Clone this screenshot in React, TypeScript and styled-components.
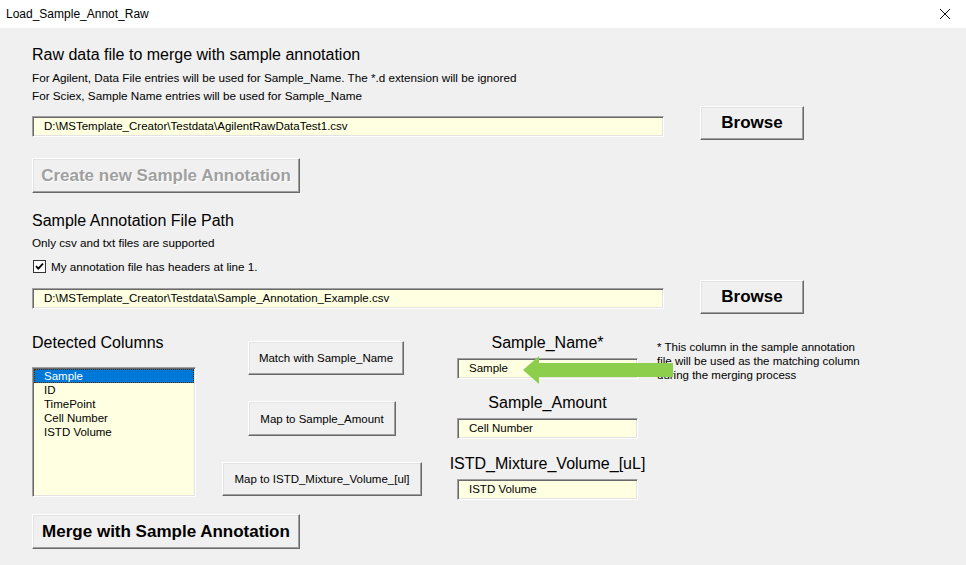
import React from "react";
import styled, { createGlobalStyle } from "styled-components";

const Global = createGlobalStyle`
  html, body { margin: 0; padding: 0; background: #f0f0f0; }
  body { font-family: "Liberation Sans", Arial, sans-serif; color: #000; }
  * { box-sizing: border-box; }
`;

const Window = styled.div`
  width: 966px;
  height: 565px;
  background: #f0f0f0;
  overflow: hidden;
  display: flex;
  flex-direction: column;
`;

const TitleBar = styled.div`
  height: 28px;
  background: #ffffff;
  display: flex;
  align-items: center;
  justify-content: space-between;
  padding: 0 0 0 6px;
`;

const Title = styled.span`
  font-size: 12px;
  color: #000;
`;

const CloseBox = styled.div`
  width: 46px;
  height: 28px;
  display: flex;
  align-items: center;
  justify-content: center;
  margin-right: -2px;
`;

const Body = styled.div`
  padding: 17px 0 0 32px;
  display: flex;
  flex-direction: column;
  align-items: flex-start;
  position: relative;
`;

const Heading = styled.div<{ $mt?: number }>`
  font-size: 16px;
  line-height: 20px;
  color: #000;
  margin-top: ${(p) => p.$mt ?? 0}px;
  white-space: nowrap;
`;

const Hint = styled.div<{ $mt?: number }>`
  font-size: 11.7px;
  line-height: 18px;
  margin-top: ${(p) => p.$mt ?? 0}px;
  white-space: nowrap;
`;

const FileRow = styled.div<{ $mt: number }>`
  display: flex;
  align-items: flex-start;
  gap: 36px;
  margin-top: ${(p) => p.$mt}px;
`;

const TextBox = styled.div<{ $w: number; $mt?: number; $pl?: number }>`
  width: ${(p) => p.$w}px;
  height: 21px;
  margin-top: ${(p) => p.$mt ?? 0}px;
  background: #ffffe1;
  border: 1px solid;
  border-color: #a0a0a0 #ffffff #ffffff #a0a0a0;
  box-shadow: inset 1px 1px 0 #696969, inset -1px -1px 0 #e3e3e3;
  font-size: 11.5px;
  line-height: 19px;
  padding-left: ${(p) => p.$pl ?? 11}px;
  white-space: nowrap;
  overflow: hidden;
`;

const Button = styled.div<{
  $w: number;
  $h: number;
  $mt?: number;
  $ml?: number;
  $bold?: boolean;
  $disabled?: boolean;
}>`
  width: ${(p) => p.$w}px;
  height: ${(p) => p.$h}px;
  margin-top: ${(p) => p.$mt ?? 0}px;
  margin-left: ${(p) => p.$ml ?? 0}px;
  background: #f0f0f0;
  border: 1px solid;
  border-color: #ffffff #696969 #696969 #ffffff;
  box-shadow: inset -1px -1px 0 #a0a0a0, inset 1px 1px 0 #e3e3e3;
  display: flex;
  align-items: center;
  justify-content: center;
  font-size: ${(p) => (p.$bold ? 17 : 11.5)}px;
  font-weight: ${(p) => (p.$bold ? 700 : 400)};
  color: ${(p) => (p.$disabled ? "#a0a0a0" : "#000")};
  text-shadow: ${(p) => (p.$disabled ? "1px 1px 0 #ffffff" : "none")};
  white-space: nowrap;
  flex-shrink: 0;
`;

const CheckRow = styled.div`
  display: flex;
  align-items: center;
  gap: 5px;
  height: 18px;
  margin-top: 5px;
  margin-left: 1px;
  font-size: 11.7px;
`;

const CheckBox = styled.div`
  width: 13px;
  height: 13px;
  background: #fff;
  border: 1px solid #333;
  display: flex;
  align-items: center;
  justify-content: center;
`;

const MapArea = styled.div`
  margin-top: 19px;
  display: flex;
  align-items: flex-start;
  position: relative;
`;

const Col = styled.div<{ $ml?: number; $w: number }>`
  width: ${(p) => p.$w}px;
  display: flex;
  flex-direction: column;
  align-items: flex-start;
  margin-left: ${(p) => p.$ml ?? 0}px;
  flex-shrink: 0;
`;

const FieldCol = styled(Col)`
  align-items: center;
`;

const ListBox = styled.div`
  margin-top: 14px;
  width: 164px;
  height: 130px;
  background: #ffffe1;
  border: 1px solid;
  border-color: #a0a0a0 #ffffff #ffffff #a0a0a0;
  box-shadow: inset 1px 1px 0 #696969, inset -1px -1px 0 #e3e3e3;
  padding: 1px 1px 0 1px;
  display: flex;
  flex-direction: column;
`;

const ListItem = styled.div<{ $selected?: boolean }>`
  font-size: 11.5px;
  line-height: ${(p) => (p.$selected ? 12 : 14)}px;
  height: 14px;
  white-space: nowrap;
  color: ${(p) => (p.$selected ? "#ffffff" : "#000")};
  background: ${(p) => (p.$selected ? "#0078d7" : "transparent")};
  border: ${(p) => (p.$selected ? "1px dotted #5a2a00" : "none")};
  padding-left: ${(p) => (p.$selected ? 9 : 10)}px;
`;

const FieldLabel = styled.div<{ $mt: number }>`
  font-size: 16px;
  line-height: 20px;
  margin-top: ${(p) => p.$mt}px;
  white-space: nowrap;
  text-align: center;
`;

const Note = styled.div`
  margin-top: 7px;
  font-size: 11.5px;
  line-height: 14px;
  width: 210px;
`;

const ArrowOverlay = styled.svg`
  position: absolute;
  left: 491px;
  top: 22px;
  z-index: 2;
`;

const CheckIcon = () => (
  <svg width="11" height="11" viewBox="0 0 11 11">
    <path d="M2 5.2 L4.3 7.6 L9 2.6" fill="none" stroke="#000" strokeWidth="1.8" />
  </svg>
);

const CloseIcon = () => (
  <svg width="12" height="12" viewBox="0 0 12 12">
    <path d="M1 1 L11 11 M11 1 L1 11" stroke="#111" strokeWidth="1" />
  </svg>
);

export default function App() {
  return (
    <>
      <Global />
      <Window>
        <TitleBar>
          <Title>Load_Sample_Annot_Raw</Title>
          <CloseBox>
            <CloseIcon />
          </CloseBox>
        </TitleBar>
        <Body>
          <Heading>Raw data file to merge with sample annotation</Heading>
          <Hint $mt={4}>
            For Agilent, Data File entries will be used for Sample_Name. The *.d extension will be ignored
          </Hint>
          <Hint>For Sciex, Sample Name entries will be used for Sample_Name</Hint>
          <FileRow $mt={1}>
            <TextBox $w={632} $mt={10}>
              D:\MSTemplate_Creator\Testdata\AgilentRawDataTest1.csv
            </TextBox>
            <Button $w={104} $h={34} $bold>
              Browse
            </Button>
          </FileRow>
          <Button $w={268} $h={35} $mt={18} $bold $disabled>
            Create new Sample Annotation
          </Button>
          <Heading $mt={18}>Sample Annotation File Path</Heading>
          <Hint $mt={3}>Only csv and txt files are supported</Hint>
          <CheckRow>
            <CheckBox>
              <CheckIcon />
            </CheckBox>
            My annotation file has headers at line 1.
          </CheckRow>
          <FileRow $mt={5}>
            <TextBox $w={632} $mt={8}>
              D:\MSTemplate_Creator\Testdata\Sample_Annotation_Example.csv
            </TextBox>
            <Button $w={104} $h={34} $bold>
              Browse
            </Button>
          </FileRow>
          <MapArea>
            <Col $w={164}>
              <Heading>Detected Columns</Heading>
              <ListBox>
                <ListItem $selected>Sample</ListItem>
                <ListItem>ID</ListItem>
                <ListItem>TimePoint</ListItem>
                <ListItem>Cell Number</ListItem>
                <ListItem>ISTD Volume</ListItem>
              </ListBox>
            </Col>
            <Col $w={200} $ml={26}>
              <Button $w={156} $h={34} $mt={8} $ml={26}>
                Match with Sample_Name
              </Button>
              <Button $w={148} $h={35} $mt={26} $ml={26}>
                Map to Sample_Amount
              </Button>
              <Button $w={200} $h={34} $mt={26}>
                Map to ISTD_Mixture_Volume_[ul]
              </Button>
            </Col>
            <FieldCol $w={181} $ml={35}>
              <FieldLabel $mt={0}>Sample_Name*</FieldLabel>
              <TextBox $w={181} $mt={5} $pl={11}>
                Sample
              </TextBox>
              <FieldLabel $mt={14}>Sample_Amount</FieldLabel>
              <TextBox $w={181} $mt={5} $pl={11}>
                Cell Number
              </TextBox>
              <FieldLabel $mt={15}>ISTD_Mixture_Volume_[uL]</FieldLabel>
              <TextBox $w={181} $mt={5} $pl={11}>
                ISTD Volume
              </TextBox>
            </FieldCol>
            <Col $w={215} $ml={19}>
              <Note>
                * This column in the sample annotation file will be used as the matching column during the merging
                process
              </Note>
            </Col>
            <ArrowOverlay width="150" height="30" viewBox="0 0 150 30">
              <path d="M0 15 L16 1 L16 8 L150 8 L150 22 L16 22 L16 29 Z" fill="#8dce4c" />
            </ArrowOverlay>
          </MapArea>
          <Button $w={268} $h={35} $mt={14} $bold>
            Merge with Sample Annotation
          </Button>
        </Body>
      </Window>
    </>
  );
}
